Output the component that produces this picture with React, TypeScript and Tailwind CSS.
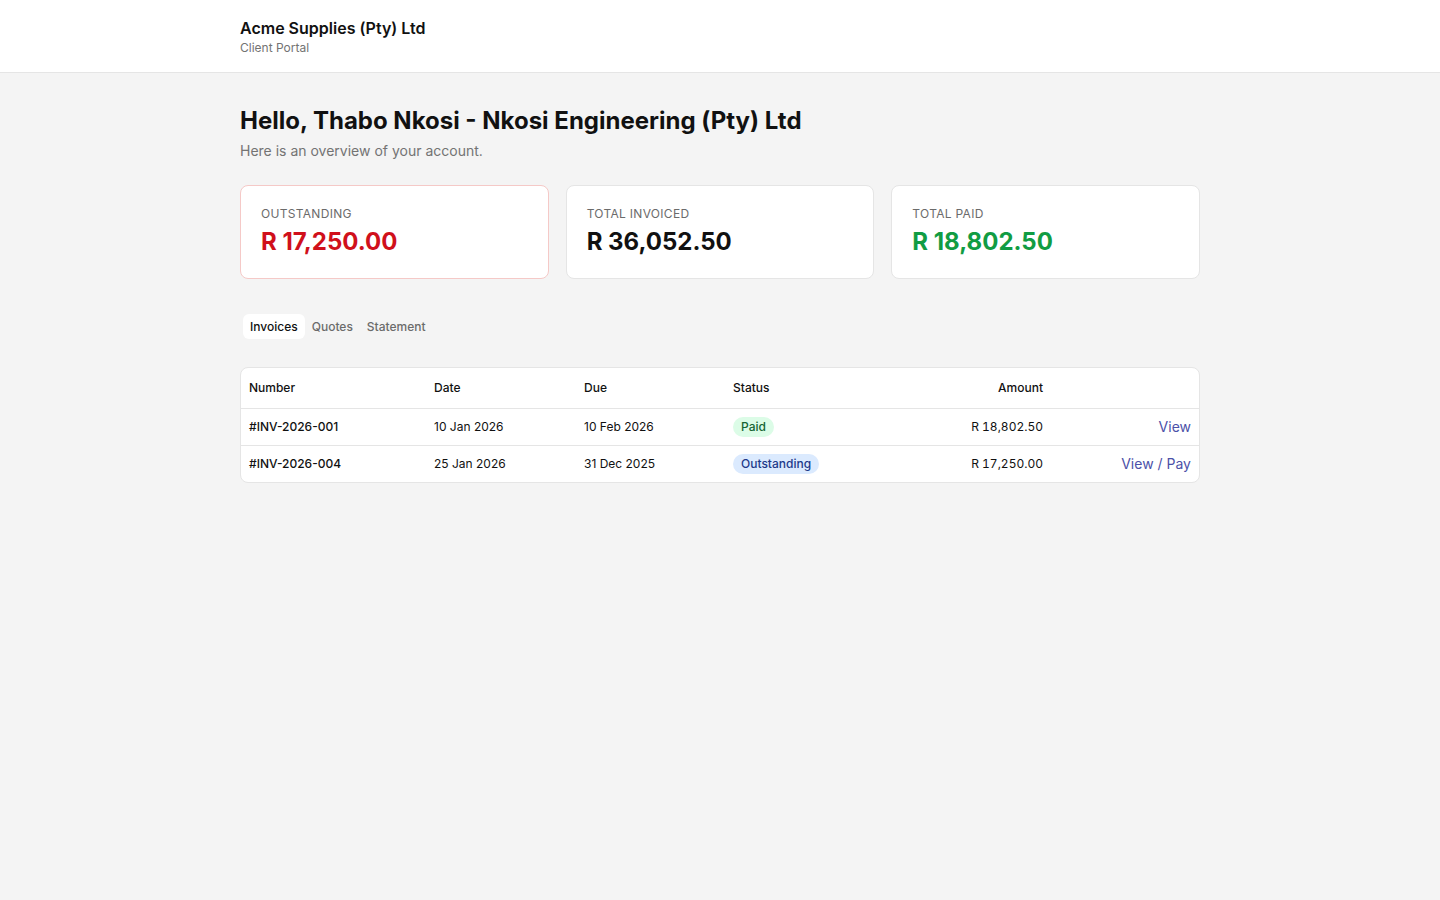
const cards = [
  { label: 'Outstanding', value: 'R 17,250.00', valueClass: 'text-[#d0101b]', borderClass: 'border-[#f5c9c7]' },
  { label: 'Total Invoiced', value: 'R 36,052.50', valueClass: 'text-[#111111]', borderClass: 'border-[#e5e5e5]' },
  { label: 'Total Paid', value: 'R 18,802.50', valueClass: 'text-[#119c43]', borderClass: 'border-[#e5e5e5]' },
];

const invoices = [
  { number: '#INV-2026-001', date: '10 Jan 2026', due: '10 Feb 2026', status: 'Paid', amount: 'R 18,802.50', action: 'View' },
  { number: '#INV-2026-004', date: '25 Jan 2026', due: '31 Dec 2025', status: 'Outstanding', amount: 'R 17,250.00', action: 'View / Pay' },
];

export default function App() {
  return (
    <div className="min-h-screen bg-[#f4f4f4] text-[#111111]" style={{ fontFamily: 'Inter, "Noto Sans", sans-serif' }}>
      {/* header */}
      <header className="h-[73px] bg-white border-b border-[#e5e5e5]">
        <div className="w-[960px] mx-auto pt-[17px]">
          <div className="text-[16px] font-semibold leading-[22px]">Acme Supplies (Pty) Ltd</div>
          <div className="mt-[1px] text-[12px] leading-[16px] text-[#737373]">Client Portal</div>
        </div>
      </header>

      <main className="w-[960px] mx-auto pt-[32px]">
        <h1 className="text-[24px] font-bold leading-[32px]">Hello, Thabo Nkosi - Nkosi Engineering (Pty) Ltd</h1>
        <p className="mt-[4px] text-[14px] leading-[20px] text-[#737373]">Here is an overview of your account.</p>

        {/* summary cards */}
        <div className="mt-[24px] grid grid-cols-3 gap-[17px]">
          {cards.map(card => (
            <div key={card.label} className={`h-[94px] bg-white rounded-lg border ${card.borderClass} px-[20px] pt-[20px]`}>
              <div className="text-[12px] leading-[16px] uppercase tracking-[0.3px] text-[#6b6b6b]">{card.label}</div>
              <div className={`mt-[4px] text-[24px] leading-[32px] font-bold ${card.valueClass}`}>{card.value}</div>
            </div>
          ))}
        </div>

        {/* tabs */}
        <div className="mt-[32px] flex items-center p-[3px] h-[31px]">
          <button className="h-[25px] px-[7px] rounded-md bg-white text-[12px] font-medium text-[#111111]">Invoices</button>
          <button className="h-[25px] px-[7px] rounded-md text-[12px] font-medium text-[#6b6b6b]">Quotes</button>
          <button className="h-[25px] px-[7px] rounded-md text-[12px] font-medium text-[#6b6b6b]">Statement</button>
        </div>

        {/* table */}
        <div className="mt-[25px] bg-white border border-[#e5e5e5] rounded-lg overflow-hidden">
          <table className="w-full table-fixed text-[12px]">
            <colgroup>
              <col className="w-[185px]" />
              <col className="w-[150px]" />
              <col className="w-[149px]" />
              <col className="w-[163px]" />
              <col className="w-[163px]" />
              <col />
            </colgroup>
            <thead>
              <tr className="h-[40px] border-b border-[#e5e5e5]">
                <th className="px-[8px] text-left font-medium">Number</th>
                <th className="px-[8px] text-left font-medium">Date</th>
                <th className="px-[8px] text-left font-medium">Due</th>
                <th className="px-[8px] text-left font-medium">Status</th>
                <th className="px-[8px] text-right font-medium">Amount</th>
                <th className="px-[8px]"></th>
              </tr>
            </thead>
            <tbody>
              {invoices.map((inv, i) => (
                <tr key={inv.number} className={`h-[37px] ${i < invoices.length - 1 ? 'border-b border-[#e5e5e5]' : ''}`}>
                  <td className="px-[8px] font-medium">{inv.number}</td>
                  <td className="px-[8px]">{inv.date}</td>
                  <td className="px-[8px]">{inv.due}</td>
                  <td className="px-[8px]">
                    {inv.status === 'Paid' ? (
                      <span className="inline-block px-[8px] py-[2px] rounded-full bg-[#dcfce7] text-[#166534] font-medium leading-[16px]">Paid</span>
                    ) : (
                      <span className="inline-block px-[8px] py-[2px] rounded-full bg-[#dbeafe] text-[#1e3a8a] font-medium leading-[16px]">Outstanding</span>
                    )}
                  </td>
                  <td className="px-[8px] text-right tabular-nums">{inv.amount}</td>
                  <td className="px-[8px] text-right">
                    <a href="#" className="text-[14px] text-[#4c51a8]">{inv.action}</a>
                  </td>
                </tr>
              ))}
            </tbody>
          </table>
        </div>
      </main>
    </div>
  );
}
